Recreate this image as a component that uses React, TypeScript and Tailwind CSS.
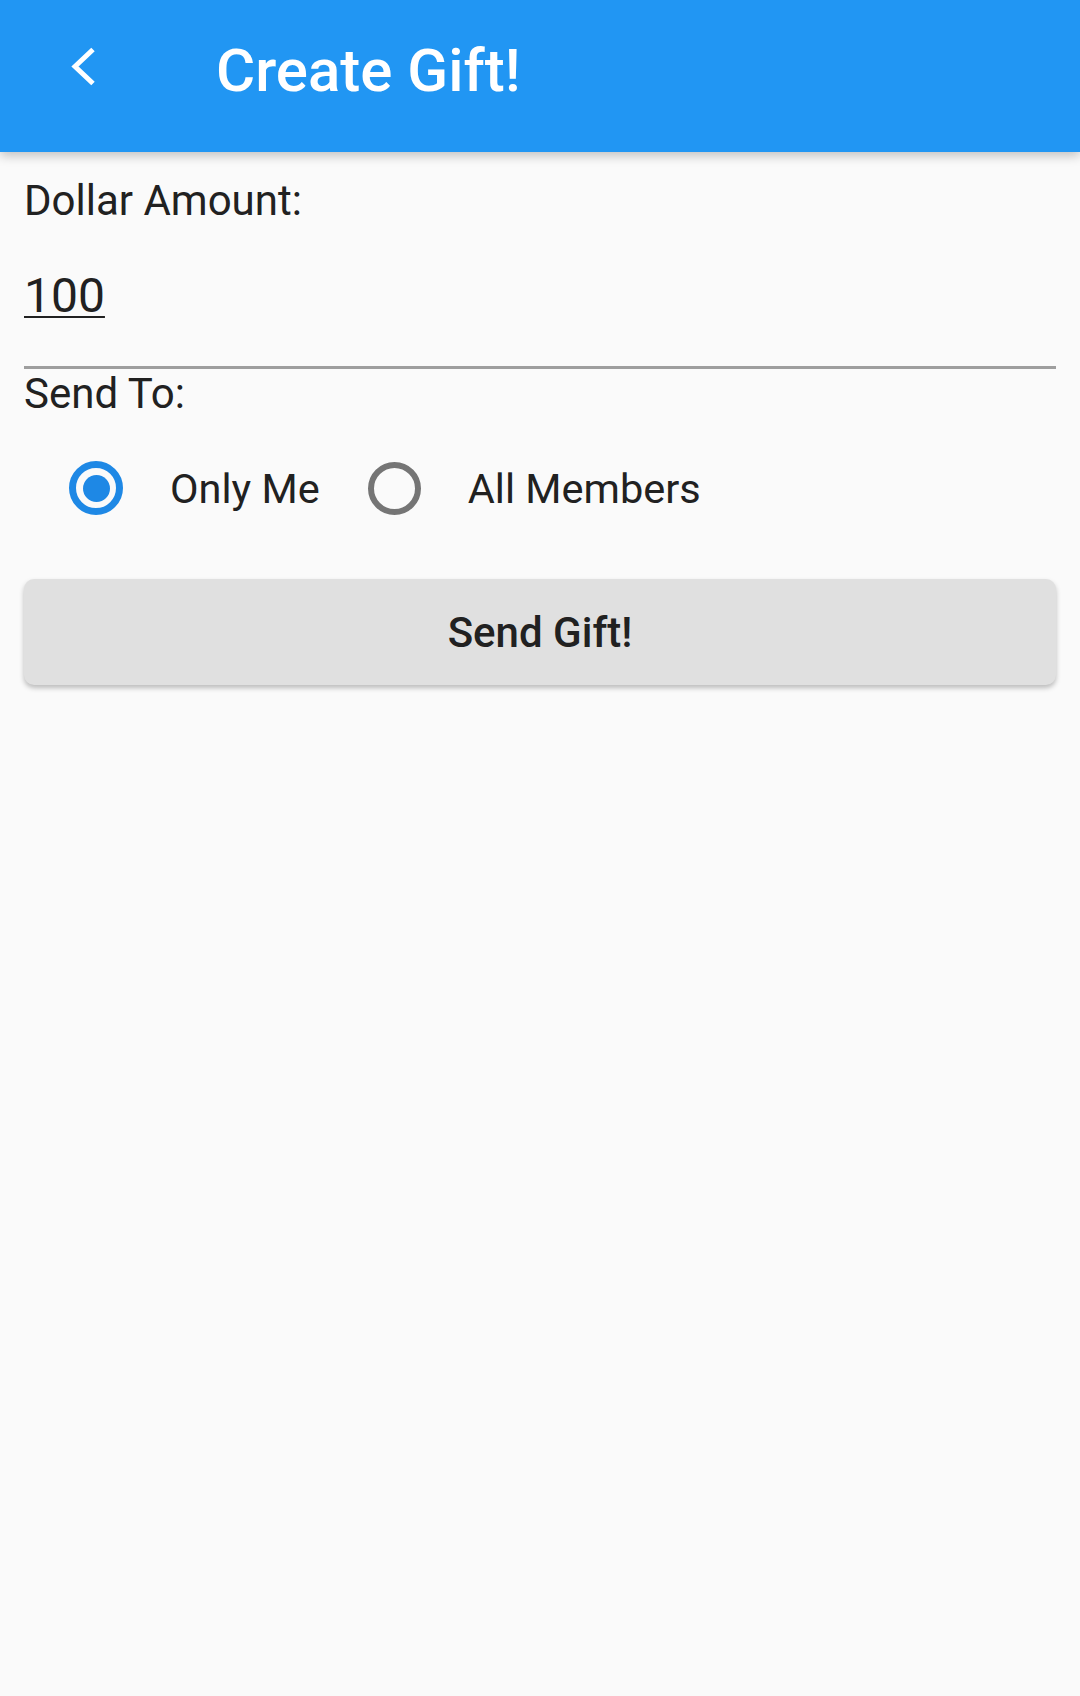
import React, { useState } from "react";

function Radio({ checked }: { checked: boolean }) {
  return checked ? (
    <div className="w-[54px] h-[54px] rounded-full border-[7px] border-[#1E88E5] flex items-center justify-center shrink-0">
      <div className="w-[27px] h-[27px] rounded-full bg-[#1E88E5]" />
    </div>
  ) : (
    <div className="w-[53px] h-[53px] rounded-full border-[6px] border-[#757575] shrink-0" />
  );
}

export default function App() {
  const [target, setTarget] = useState("me");

  return (
    <div
      className="min-h-[1696px] w-[1080px] bg-[#fafafa] text-[#212121]"
      style={{ fontFamily: "Roboto, 'Noto Sans', sans-serif" }}
    >
      <header className="relative z-10 h-[152px] bg-[#2196F3] flex items-start shadow-[0_4px_10px_rgba(0,0,0,0.22)]">
        <button className="ml-[69px] mt-[47px] w-[28px] h-[39px]">
          <svg viewBox="0 0 28 39" width="28" height="39">
            <polyline
              points="24,2.5 6,19.5 24,36.5"
              fill="none"
              stroke="white"
              strokeWidth="5"
              strokeLinejoin="miter"
            />
          </svg>
        </button>
        <h1 className="ml-[119px] mt-[36px] text-[60px] leading-[70px] font-medium text-white">
          Create Gift!
        </h1>
      </header>

      <main className="px-[24px]">
        <div className="mt-[24px] text-[42px] leading-[49px]">Dollar Amount:</div>

        <div className="mt-[43px] text-[48px] leading-[56px] underline decoration-[2px] underline-offset-[4px]">
          100
        </div>
        <div className="mt-[42px] h-[3px] bg-[#9e9e9e]" />

        <div className="text-[42px] leading-[49px]">Send To:</div>

        <div className="h-[140px] flex items-center">
          <button className="ml-[45px] flex items-center" onClick={() => setTarget("me")}>
            <Radio checked={target === "me"} />
            <span className="ml-[47px] text-[41.5px] leading-[49px]">Only Me</span>
          </button>
          <button className="ml-[48px] flex items-center" onClick={() => setTarget("all")}>
            <Radio checked={target === "all"} />
            <span className="ml-[47px] text-[41.5px] leading-[49px]">All Members</span>
          </button>
        </div>

        <button className="mt-[21px] w-full h-[106px] rounded-[10px] bg-[#e0e0e0] flex items-center justify-center text-[42px] leading-[49px] font-medium text-[#212121] shadow-[0_3px_5px_rgba(0,0,0,0.25)]">
          Send Gift!
        </button>
      </main>
    </div>
  );
}
